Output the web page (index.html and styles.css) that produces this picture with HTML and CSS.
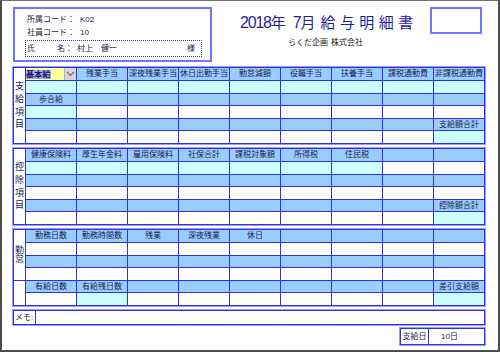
FILE: index.html
```html
<!DOCTYPE html>
<html lang="ja">
<head>
<meta charset="utf-8">
<title>給与明細書</title>
<link rel="stylesheet" href="styles.css">
</head>
<body>
<div class="page">
  <div class="content">
    <div class="top">
      <div class="idbox">
        <div class="idline">所属コード：<span class="val">K02</span></div>
        <div class="idline">社員コード：<span class="val">10</span></div>
        <div class="namebox">
          <span class="nm1">氏</span><span>名</span><span>：</span><span class="nm3">村上</span><span class="nm4">健一</span><span class="sama">様</span>
        </div>
      </div>
      <div class="titles">
        <div class="title"><span class="yr">2018</span>年<span class="gap"></span><span class="yr">7</span>月<span class="gap2"></span><span class="sp">給与明細書</span></div>
        <div class="company">らくだ企画<span class="cgap"></span>株式会社</div>
      </div>
      <div class="stamp"></div>
    </div>

    <div class="tbl t1">
      <div class="lbl">支<br>給<br>項<br>目</div>
      <div class="sel"><span class="selt">基本給</span><span class="selbtn"><svg width="9" height="6" viewBox="0 0 9 6"><path d="M1 1 L4.5 4.5 L8 1" fill="none" stroke="#6a6a7a" stroke-width="1.2"/></svg></span></div>
      <div class="h">残業手当</div><div class="h">深夜残業手当</div><div class="h">休日出勤手当</div><div class="h">勤怠減額</div><div class="h">役職手当</div><div class="h">扶養手当</div><div class="h">課税通勤費</div><div class="h">非課税通勤費</div>

      <div class="c"></div><div class="c"></div><div class="c"></div><div class="c"></div><div class="c"></div><div class="c"></div><div class="c"></div><div class="c"></div><div class="c"></div>

      <div class="h">歩合給</div><div class="h"></div><div class="h"></div><div class="h"></div><div class="h"></div><div class="h"></div><div class="h"></div><div class="h"></div><div class="h"></div>

      <div class="c"></div><div></div><div></div><div></div><div></div><div></div><div></div><div></div><div></div>

      <div class="h"></div><div class="h"></div><div class="h"></div><div class="h"></div><div class="h"></div><div class="h"></div><div class="h"></div><div class="h"></div><div class="h">支給額合計</div>

      <div></div><div></div><div></div><div></div><div></div><div></div><div></div><div></div><div class="c"></div>
    </div>

    <div class="tbl t2">
      <div class="lbl">控<br>除<br>項<br>目</div>
      <div class="h">健康保険料</div><div class="h">厚生年金料</div><div class="h">雇用保険料</div><div class="h">社保合計</div><div class="h">課税対象額</div><div class="h">所得税</div><div class="h">住民税</div><div class="h"></div><div class="h"></div>

      <div class="c"></div><div class="c"></div><div class="c"></div><div class="c"></div><div class="c"></div><div class="c"></div><div class="c"></div><div></div><div></div>

      <div class="h"></div><div class="h"></div><div class="h"></div><div class="h"></div><div class="h"></div><div class="h"></div><div class="h"></div><div class="h"></div><div class="h"></div>

      <div></div><div></div><div></div><div></div><div></div><div></div><div></div><div></div><div></div>

      <div class="h"></div><div class="h"></div><div class="h"></div><div class="h"></div><div class="h"></div><div class="h"></div><div class="h"></div><div class="h"></div><div class="h">控除額合計</div>

      <div></div><div></div><div></div><div></div><div></div><div></div><div></div><div></div><div class="c"></div>
    </div>

    <div class="tbl t3">
      <div class="lbl lbl4">勤<br>怠</div>
      <div class="h">勤務日数</div><div class="h">勤務時間数</div><div class="h">残業</div><div class="h">深夜残業</div><div class="h">休日</div><div class="h"></div><div class="h"></div><div class="h"></div><div class="h"></div>

      <div></div><div></div><div></div><div></div><div></div><div></div><div></div><div></div><div></div>

      <div class="h"></div><div class="h"></div><div class="h"></div><div class="h"></div><div class="h"></div><div class="h"></div><div class="h"></div><div class="h"></div><div class="h"></div>

      <div></div><div></div><div></div><div></div><div></div><div></div><div></div><div></div><div></div>

      <div class="lbl2"></div>
      <div class="h">有給日数</div><div class="h">有給残日数</div><div class="h"></div><div class="h"></div><div class="h"></div><div class="h"></div><div class="h"></div><div class="h"></div><div class="h">差引支給額</div>

      <div></div><div class="c"></div><div></div><div></div><div></div><div></div><div></div><div></div><div class="c"></div>
    </div>

    <div class="memo">
      <div class="memol">メモ:</div>
      <div></div>
    </div>

    <div class="paydate">
      <div class="payl">支給日</div>
      <div class="payv">10日</div>
    </div>
  </div>
</div>
</body>
</html>
```

FILE: styles.css
```css
body {
  margin: 0;
  background: #fff;
}

.page {
  width: 500px;
  height: 352px;
  box-sizing: border-box;
  border: 2px solid #4d4d4d;
  border-top: 1px solid #6f6f6f;
  padding: 6px 0 0 11px;
  font-family: "Liberation Sans", "Noto Sans CJK JP", sans-serif;
  color: #1a1a4d;
  background: #fff;
  overflow: hidden;
}

.content {
  width: 472px;
}

/* ---------- header ---------- */
.top {
  display: flex;
  height: 55px;
}

.idbox {
  width: 199px;
  height: 55px;
  box-sizing: border-box;
  border: 2px solid #7373ff;
  padding: 4px 0 0 12px;
  font-size: 8px;
  color: #22223a;
}

.idline {
  height: 13px;
  line-height: 13px;
  white-space: nowrap;
}

.val {
  margin-left: 5px;
}

.namebox {
  margin: 1px 0 0 -2px;
  width: 177px;
  height: 17px;
  box-sizing: border-box;
  border: 1px dotted #3a3a9a;
  display: flex;
  align-items: center;
  padding: 0 6px 0 1px;
  line-height: 1;
}

.nm1 {
  margin-right: 22px;
}

.nm3 {
  margin-left: 4px;
}

.nm4 {
  margin-left: 8px;
}

.sama {
  margin-left: auto;
}

.titles {
  margin-left: 28px;
  padding-top: 6px;
}

.title {
  font-size: 15px;
  line-height: 20px;
  color: #1f1f9c;
  white-space: nowrap;
}

.yr {
  font-size: 16px;
  letter-spacing: -1.2px;
}

.gap {
  display: inline-block;
  width: 7px;
}

.gap2 {
  display: inline-block;
  width: 5px;
}

.sp {
  letter-spacing: 4.4px;
}

.company {
  margin: 4px 0 0 48px;
  font-size: 8px;
  line-height: 12px;
  color: #222;
  white-space: nowrap;
}

.cgap {
  display: inline-block;
  width: 3px;
}

.stamp {
  width: 52px;
  height: 27px;
  box-sizing: border-box;
  border: 2px solid #7373ff;
  margin-left: auto;
  margin-right: 3px;
}

/* ---------- tables ---------- */
.tbl {
  display: grid;
  grid-template-columns: 11px repeat(9, 50px);
  grid-template-rows: 12px 12px 11px 12px 11px 12px;
  gap: 1px;
  width: max-content;
  background: #2f2ff2;
  border: 1px solid #2f2ff2;
  outline: 1px solid #9c9cff;
}

.t1 {
  margin-top: 5px;
}

.t2,
.t3 {
  margin-top: 4px;
}

.tbl > div {
  background: #fff;
  font-size: 8px;
  line-height: 1;
  display: flex;
  align-items: center;
  justify-content: center;
  white-space: nowrap;
  overflow: hidden;
}

.tbl > .h {
  background: #99ccff;
}

.tbl > .c {
  background: #ccffff;
}

.tbl > .lbl {
  grid-row: span 6;
  font-size: 9px;
  line-height: 12.7px;
  text-align: center;
  color: #1a1a4d;
}

.tbl > .lbl4 {
  grid-row: span 4;
  line-height: 9.5px;
}

.tbl > .lbl2 {
  grid-row: span 2;
}

.tbl > .sel {
  background: #ffff99;
  justify-content: flex-start;
  align-items: stretch;
}

.selt {
  align-self: center;
  background: #a8a8e0;
  color: #14146e;
  font-weight: bold;
  font-size: 8px;
  line-height: 9px;
  letter-spacing: 0.2px;
}

.selbtn {
  margin-left: auto;
  width: 11px;
  background: #d8d8dc;
  border-left: 1px solid #b0b0b8;
  display: flex;
  align-items: center;
  justify-content: center;
}

/* ---------- memo & pay date ---------- */
.memo {
  margin-top: 4px;
  display: grid;
  grid-template-columns: 21px 448px;
  grid-template-rows: 13px;
  gap: 1px;
  width: max-content;
  background: #2f2ff2;
  border: 1px solid #2f2ff2;
  outline: 1px solid #9c9cff;
}

.memo > div {
  background: #fff;
}

.memol {
  font-size: 8px;
  line-height: 13px;
  padding-left: 1px;
  white-space: nowrap;
}

.paydate {
  margin: 3px 0 0 387px;
  display: grid;
  grid-template-columns: 27px 55px;
  grid-template-rows: 15px;
  gap: 1px;
  width: max-content;
  background: #2f2ff2;
  border: 1px solid #2f2ff2;
  outline: 1px solid #9c9cff;
}

.paydate > div {
  background: #fff;
  font-size: 8px;
  line-height: 15px;
  white-space: nowrap;
}

.payl {
  text-align: center;
}

.payv {
  padding-left: 12px;
}
```
